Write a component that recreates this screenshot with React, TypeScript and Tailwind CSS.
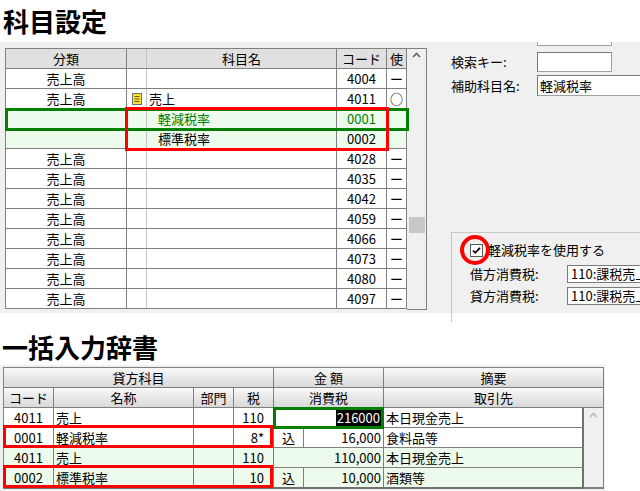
import React from "react";

type TopRow = {
  cat: string;
  name: string;
  code: string;
  use: string;
  icon?: boolean;
  sub?: boolean;
  green?: boolean;
  hl?: boolean;
};

const topRows: TopRow[] = [
  { cat: "売上高", name: "", code: "4004", use: "ー" },
  { cat: "売上高", name: "売上", icon: true, code: "4011", use: "○" },
  { cat: "", name: "軽減税率", sub: true, code: "0001", use: "", green: true, hl: true },
  { cat: "", name: "標準税率", sub: true, code: "0002", use: "", hl: true },
  ...["4028", "4035", "4042", "4059", "4066", "4073", "4080", "4097"].map((c) => ({
    cat: "売上高",
    name: "",
    code: c,
    use: "ー",
  })),
];

type BotRow = {
  code: string;
  name: string;
  tax: string;
  komi: boolean;
  amount: string;
  memo: string;
  hl: boolean;
  sel?: boolean;
};

const botRows: BotRow[] = [
  { code: "4011", name: "売上", tax: "110", komi: false, amount: "216000", memo: "本日現金売上", hl: false, sel: true },
  { code: "0001", name: "軽減税率", tax: "8*", komi: true, amount: "16,000", memo: "食料品等", hl: false },
  { code: "4011", name: "売上", tax: "110", komi: false, amount: "110,000", memo: "本日現金売上", hl: true },
  { code: "0002", name: "標準税率", tax: "10", komi: true, amount: "10,000", memo: "酒類等", hl: true },
];

function Chevron({ color }: { color: string }) {
  return (
    <svg width="9" height="6" viewBox="0 0 9 6">
      <path d="M1 5 L4.5 1.5 L8 5" fill="none" stroke={color} strokeWidth="1.6" />
    </svg>
  );
}

function TreeIcon() {
  return (
    <svg width="10" height="12" viewBox="0 0 10 12">
      <rect x="0.5" y="0.5" width="9" height="11" fill="#f3e23c" stroke="#707070" />
      <line x1="2.5" y1="3.5" x2="7.5" y2="3.5" stroke="#6a5a00" />
      <line x1="2.5" y1="6" x2="7.5" y2="6" stroke="#6a5a00" />
      <line x1="2.5" y1="8.5" x2="7.5" y2="8.5" stroke="#6a5a00" />
    </svg>
  );
}

function CheckBox() {
  return (
    <svg width="13" height="13" viewBox="0 0 13 13">
      <rect x="0.5" y="0.5" width="12" height="12" fill="#ffffff" stroke="#5a5a5a" />
      <path d="M3 6.5 L5.2 8.8 L10 3.8" fill="none" stroke="#000" strokeWidth="1.8" />
    </svg>
  );
}

export default function App() {
  return (
    <div className="relative w-[640px] h-[491px] overflow-hidden bg-white text-black text-[13px] font-['Noto_Sans_CJK_JP',sans-serif]">
      {/* Title 1 */}
      <div className="h-[42px] pt-[7px] pl-[3px] text-[26px] leading-[28px] font-bold">科目設定</div>

      {/* Top screenshot */}
      <div className="h-[271px] bg-[#f0f0f0] flex">
        <div className="pl-[5px] pt-[6px] flex items-start">
          <div className="w-[402px] border-l border-t border-[#808080]">
            <div className="flex h-[20px] border-b border-[#808080] bg-[#e0e0e0] leading-[19px]">
              <div className="w-[121px] border-r border-[#808080] text-center">分類</div>
              <div className="w-[20px] border-r border-[#c4c4c4]"></div>
              <div className="w-[190px] border-r border-[#808080] text-center">科目名</div>
              <div className="w-[50px] border-r border-[#808080] text-center">コード</div>
              <div className="w-[20px] border-r border-[#808080] text-center">使</div>
            </div>
            {topRows.map((r, i) => (
              <div
                key={i}
                className={`flex h-[20px] border-b border-[#808080] leading-[19px] ${r.hl ? "bg-[#ecfbec]" : "bg-white"} ${r.green ? "text-[#008000]" : "text-black"}`}
              >
                <div className="w-[121px] border-r border-[#808080] text-center">{r.cat}</div>
                <div className="w-[20px] border-r border-[#c4c4c4] flex items-center justify-center">
                  {r.icon ? <TreeIcon /> : null}
                </div>
                <div className={`w-[190px] border-r border-[#808080] ${r.sub ? "pl-[11px]" : "pl-[2px]"}`}>{r.name}</div>
                <div className="w-[50px] border-r border-[#808080] text-center">{r.code}</div>
                <div className="w-[20px] border-r border-[#808080] text-center">{r.use}</div>
              </div>
            ))}
          </div>
          <div className="w-[20px] h-[262px] border-t border-b border-r border-[#808080] bg-[#f0f0f0] flex flex-col items-center">
            <div className="h-[12px] flex items-center">
              <Chevron color="#606060" />
            </div>
            <div className="mt-[156px] w-[16px] h-[16px] bg-[#c8c8c8]" />
          </div>
        </div>

        {/* Right panel */}
        <div className="w-[213px] shrink-0">
          <div className="ml-[110px] w-[75px] h-[4px] bg-white border-l border-r border-b border-[#a0a0a0]" />
          <div className="flex items-center mt-[6px] pl-[24px] h-[20px]">
            <div className="w-[86px]">検索キー:</div>
            <div className="w-[75px] h-[20px] bg-white border border-[#a0a0a0] border-t-[#7a7a7a] border-l-[#7a7a7a]" />
          </div>
          <div className="flex items-center mt-[3px] pl-[24px] h-[21px]">
            <div className="w-[86px] shrink-0">補助科目名:</div>
            <div className="w-[120px] shrink-0 h-[21px] bg-white border border-[#a0a0a0] border-t-[#7a7a7a] border-l-[#7a7a7a] pl-[2px] leading-[19px]">
              軽減税率
            </div>
          </div>
          <div className="mt-[136px] ml-[24px] w-[200px] h-[90px] border-l border-t border-[#c8c8c8] pl-[18px] pt-[7px]">
            <div className="flex items-center h-[20px] gap-[5px]">
              <CheckBox />
              <span className="whitespace-nowrap">軽減税率を使用する</span>
            </div>
            <div className="flex items-center h-[22px] mt-[3px]">
              <div className="w-[97px] shrink-0">借方消費税:</div>
              <div className="w-[120px] shrink-0 h-[18px] bg-white border border-[#7a7a7a] pl-[3px] leading-[16px] whitespace-nowrap">
                110:課税売上
              </div>
            </div>
            <div className="flex items-center h-[22px]">
              <div className="w-[97px] shrink-0">貸方消費税:</div>
              <div className="w-[120px] shrink-0 h-[18px] bg-white border border-[#7a7a7a] pl-[3px] leading-[16px] whitespace-nowrap">
                110:課税売上
              </div>
            </div>
          </div>
        </div>
      </div>

      {/* Title 2 */}
      <div className="h-[52px] pt-[20px] pl-[2px] text-[26px] leading-[28px] font-bold">一括入力辞書</div>

      {/* Bottom screenshot */}
      <div className="w-[605px] h-[126px] bg-[#f0f0f0] pt-[2px] pl-[3px]">
        <div className="w-[601px] border-l border-t border-[#808080]">
          <div className="flex h-[20px] border-b border-[#808080] bg-gradient-to-b from-[#f8f8f8] to-[#d9d9d9] leading-[19px]">
            <div className="w-[270px] border-r border-[#808080] text-center">貸方科目</div>
            <div className="w-[110px] border-r border-[#808080] text-center">金 額</div>
            <div className="w-[220px] border-r border-[#808080] text-center">摘要</div>
          </div>
          <div className="flex h-[20px] border-b border-[#808080] bg-gradient-to-b from-[#f8f8f8] to-[#d9d9d9] leading-[19px]">
            <div className="w-[50px] border-r border-[#808080] text-center">コード</div>
            <div className="w-[140px] border-r border-[#808080] text-center">名称</div>
            <div className="w-[40px] border-r border-[#808080] text-center">部門</div>
            <div className="w-[40px] border-r border-[#808080] text-center">税</div>
            <div className="w-[110px] border-r border-[#808080] text-center">消費税</div>
            <div className="w-[220px] border-r border-[#808080] text-center">取引先</div>
          </div>
          <div className="flex">
            <div className="w-[580px] border-b-2 border-[#707070]">
              {botRows.map((r, i) => (
                <div
                  key={i}
                  className={`flex leading-[19px] ${i < 3 ? "h-[20px] border-b border-[#808080]" : "h-[19px]"} ${r.hl ? "bg-[#ecfbec]" : "bg-white"}`}
                >
                  <div className="w-[50px] border-r border-[#808080] text-center">{r.code}</div>
                  <div className="w-[140px] border-r border-[#808080] pl-[2px]">{r.name}</div>
                  <div className="w-[40px] border-r border-[#808080]"></div>
                  <div className="w-[40px] border-r border-[#808080] text-right pr-[9px]">{r.tax}</div>
                  {r.komi ? (
                    <>
                      <div className="w-[30px] border-r border-[#808080] text-center">込</div>
                      <div className="w-[80px] border-r border-[#808080] text-right pr-[2px]">{r.amount}</div>
                    </>
                  ) : (
                    <div className="w-[110px] border-r border-[#808080] text-right pr-[2px]">
                      {r.sel ? (
                        <span className="bg-black text-white px-[1px]">{r.amount}</span>
                      ) : (
                        r.amount
                      )}
                    </div>
                  )}
                  <div className="w-[200px] border-r-2 border-[#707070] pl-[2px]">{r.memo}</div>
                </div>
              ))}
            </div>
            <div className="w-[20px] border-r border-b-2 border-[#808080] bg-[#f0f0f0] flex flex-col items-center">
              <div className="h-[14px] flex items-center">
                <Chevron color="#b8b8b8" />
              </div>
            </div>
          </div>
        </div>
      </div>

      {/* Overlays */}
      <div className="absolute left-[5px] top-[108px] w-[404px] h-[23px] border-[3px] border-[#008000]" />
      <div className="absolute left-[125px] top-[107px] w-[264px] h-[44px] border-[3px] border-[#ff0000]" />
      <div className="absolute left-[460px] top-[235px] w-[30px] h-[30px] rounded-full border-4 border-[#ff0000]" />
      <div className="absolute left-[273px] top-[407px] w-[111px] h-[22px] border-[3px] border-[#008000]" />
      <div className="absolute left-[3px] top-[425px] w-[270px] h-[23px] border-[3px] border-[#ff0000]" />
      <div className="absolute left-[3px] top-[465px] w-[270px] h-[23px] border-[3px] border-[#ff0000]" />
    </div>
  );
}
